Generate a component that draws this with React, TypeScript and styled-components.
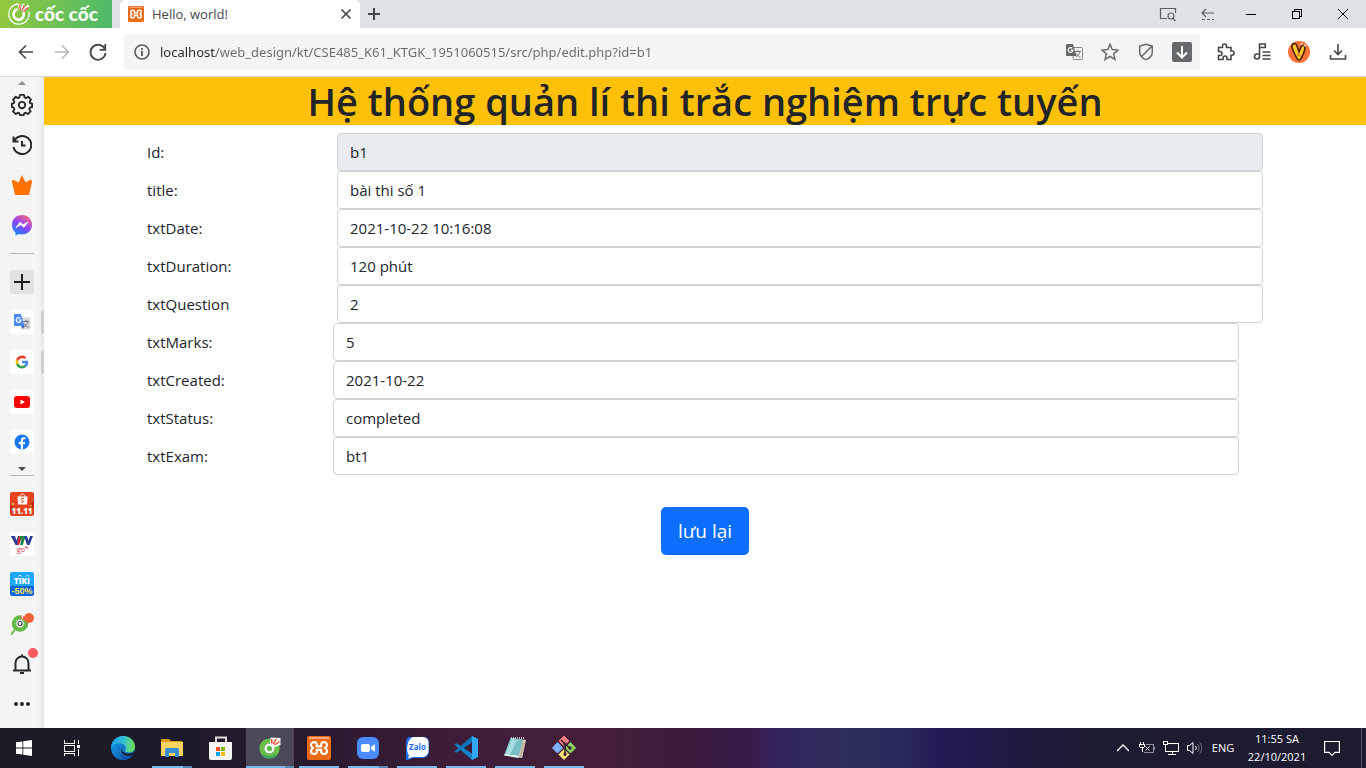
import React from 'react';
import styled, { createGlobalStyle } from 'styled-components';

const Global = createGlobalStyle`
  *, *::before, *::after { box-sizing: border-box; }
  body { margin: 0; background: #fff; font-family: "Open Sans", "Noto Sans", sans-serif; color: #212529; }
  button { font: inherit; color: inherit; border: 0; padding: 0; background: none; cursor: pointer; }
  a { color: inherit; text-decoration: none; }
  svg { display: block; flex: none; }
`;

/* ---------- shell ---------- */
const Screen = styled.div`
  display: flex;
  flex-direction: column;
  min-height: 100vh;
`;
const Body = styled.div`
  display: flex;
  flex: 1;
`;

/* ---------- tab strip ---------- */
const TabStrip = styled.header`
  display: flex;
  height: 28px;
  background: #dee1e6;
`;
const Brand = styled.button`
  display: flex;
  align-items: center;
  gap: 5px;
  width: 112px;
  padding-left: 8px;
  background: linear-gradient(100deg, #93c83d, #4cb96b);
`;
const BrandName = styled.span`
  color: #fff;
  font: 900 19px/28px Lato, sans-serif;
  white-space: nowrap;
`;
const Tab = styled.div`
  display: flex;
  align-items: center;
  gap: 8px;
  width: 240px;
  margin-left: 8px;
  padding: 0 6px 0 8px;
  background: #fff;
  border-radius: 6px 6px 0 0;
`;
const TabTitle = styled.span`
  flex: 1;
  font-size: 13px;
  line-height: 20px;
  color: #45484c;
`;
const StripButton = styled.button<{ $w: number }>`
  display: grid;
  place-items: center;
  width: ${p => p.$w}px;
  height: 28px;
`;
const Spacer = styled.div`
  flex: 1;
`;

/* ---------- toolbar ---------- */
const Toolbar = styled.nav`
  display: flex;
  align-items: center;
  height: 49px;
  padding: 0 8px;
  background: #fff;
  border-bottom: 1px solid #d5d8dc;
`;
const ToolButton = styled.button<{ $w?: number }>`
  display: grid;
  place-items: center;
  flex: none;
  width: ${p => p.$w ?? 36}px;
  height: 36px;
`;
const AddressBar = styled.div`
  display: flex;
  align-items: center;
  flex: 1;
  height: 36px;
  margin: 0 8px;
  background: #f4f4f4;
  border-radius: 4px;
`;
const AddressInput = styled.input`
  flex: 1;
  min-width: 0;
  height: 24px;
  padding: 0;
  border: 0;
  outline: 0;
  font: 13px/24px "Noto Sans", "Open Sans", sans-serif;
  color: transparent;
  caret-color: #222;
  background: linear-gradient(90deg, #26282b 56px, #66696d 56px);
  -webkit-background-clip: text;
  background-clip: text;
`;

/* ---------- sidebar ---------- */
const Sidebar = styled.aside`
  display: flex;
  flex-direction: column;
  align-items: center;
  flex: none;
  width: 44px;
  background: linear-gradient(90deg, #f4f4f4 38px, #e9e9e9);
`;
const ScrollArrow = styled.button<{ $h: number }>`
  display: grid;
  place-items: end center;
  width: 24px;
  height: ${p => p.$h}px;
  padding-bottom: ${p => (p.$h > 8 ? 4 : 0)}px;
`;
const SideRule = styled.hr<{ $top: number }>`
  width: 24px;
  height: 1px;
  margin: ${p => p.$top}px 0 8px;
  border: 0;
  background: #b5b5b5;
`;
const SideButton = styled.button<{ $tile?: string; $open?: boolean }>`
  position: relative;
  display: grid;
  place-items: center;
  width: 44px;
  height: 40px;
  > span {
    display: grid;
    place-items: center;
    width: 24px;
    height: 24px;
    overflow: hidden;
    border-radius: 3px;
    background: ${p => p.$tile ?? 'transparent'};
  }
  &::after {
    content: "";
    display: ${p => (p.$open ? 'block' : 'none')};
    position: absolute;
    right: 0;
    top: 8px;
    width: 3px;
    height: 24px;
    background: #d0d0d0;
    border-radius: 3px 0 0 3px;
  }
`;
const Badge = styled.i<{ $x: number; $y: number; $color: string }>`
  position: absolute;
  left: ${p => p.$x}px;
  top: ${p => p.$y}px;
  width: 10px;
  height: 10px;
  border-radius: 50%;
  background: ${p => p.$color};
`;

/* ---------- page ---------- */
const Page = styled.main`
  flex: 1;
  min-width: 0;
  background: #fff;
`;
const Title = styled.h1`
  margin: 0 0 8px;
  background: #ffc107;
  font-size: 38px;
  line-height: 48px;
  height: 48px;
  font-weight: 600;
  text-align: center;
  white-space: nowrap;
`;
const Form = styled.form`
  padding: 0 103px;
`;
const Field = styled.div<{ $narrow: boolean }>`
  display: grid;
  grid-template-columns: ${p => (p.$narrow ? 186 : 190)}px 1fr;
  align-items: center;
  padding-right: ${p => (p.$narrow ? 24 : 0)}px;
`;
const FieldLabel = styled.label`
  font-size: 15px;
  line-height: 24px;
`;
const FieldInput = styled.input`
  width: 100%;
  height: 38px;
  padding: 6px 12px;
  border: 1px solid #ced4da;
  border-radius: 4px;
  background: #fff;
  color: #212529;
  font: 15px/24px "Open Sans", "Noto Sans", sans-serif;
  &:read-only { background: #e9ecef; }
`;
const SaveButton = styled.button`
  display: block;
  width: 88px;
  height: 48px;
  margin: 32px auto 0;
  border-radius: 5px;
  background: #0d6efd;
  color: #fff;
  font-size: 19px;
  line-height: 30px;
`;
const Actions = styled.div`
  display: flex;
`;

/* ---------- taskbar ---------- */
const Taskbar = styled.footer`
  display: flex;
  height: 40px;
  color: #fff;
  background: linear-gradient(90deg, #1c1a26 0%, #1f1a2a 14%, #2b1a31 24%, #3f1d38 34%, #451e39 44%,
    #3b1c3a 50%, #371c4b 55%, #33245e 57%, #2d2f59 62%, #27295b 66%, #241a53 69%, #201a42 74%, #1c1c30 80%, #1d1b30 100%);
`;
const TaskButton = styled.button<{ $active?: boolean }>`
  display: grid;
  place-items: center;
  width: 48px;
  height: 40px;
  background: ${p => (p.$active ? '#4d4859' : 'transparent')};
`;
const Apps = styled.div`
  display: flex;
  gap: 1px;
  margin-left: 3px;
`;
const AppButton = styled(TaskButton)<{ $bar?: 'one' | 'many' }>`
  position: relative;
  &::after {
    content: "";
    display: ${p => (p.$bar ? 'block' : 'none')};
    position: absolute;
    left: ${p => (p.$active ? 0 : 4)}px;
    right: ${p => (p.$active ? 0 : 4)}px;
    bottom: 0;
    height: 2px;
    background: ${p => (p.$bar === 'many' ? 'linear-gradient(90deg, #76b9ed calc(100% - 9px), #5688b0 calc(100% - 9px))' : '#76b9ed')};
  }
`;
const TrayButton = styled(TaskButton)<{ $w: number }>`
  width: ${p => p.$w}px;
  font-size: 11px;
  line-height: 18px;
`;
const Peek = styled.button`
  width: 5px;
  margin-left: 12px;
  border-left: 1px solid #5c5a68;
`;

/* ---------- icons ---------- */
type LineProps = { d: string; s?: number; w?: number; c?: string; box?: number; crisp?: boolean };
const Line = ({ d, s = 20, w = 1.6, c = '#44474b', box = 20, crisp }: LineProps) => (
  <svg width={s} height={s} viewBox={`0 0 ${box} ${box}`} fill="none" stroke={c} strokeWidth={w} shapeRendering={crisp ? 'crispEdges' : 'auto'}>
    <path d={d} />
  </svg>
);

const BrandMark = () => (
  <svg width="22" height="22" viewBox="0 0 22 22" fill="none" stroke="#fff">
    <path d="M20.800 8.500A10.200 10.200 0 1 1 10.500.8" strokeWidth="1.200" />
    <path d="M15.300 9A5.200 5.200 0 1 1 9.500 6.300" strokeWidth="2.600" />
    <path d="M11 1.500l1.500 5M15.500 1l-1.500 6M20.500 2.500l-5.500 6" strokeWidth="2.600" />
    <path d="M11.500 2l1.300 5M16.300 2l-2 5M20 4.500l-4.500 4" stroke="#ef4b3c" strokeWidth="1.200" />
  </svg>
);

const CocMark = () => (
  <svg width="22" height="22" viewBox="0 0 22 22" fill="none">
    <circle cx="10.500" cy="11.500" r="7.600" stroke="#6cc04a" strokeWidth="5" />
    <path d="M4 18a9.500 9.500 0 0 0 13 0" stroke="#3ba55a" strokeWidth="2.500" />
    <circle cx="10.500" cy="11.500" r="5" fill="#fff" />
    <circle cx="10.500" cy="11.500" r="2.800" fill="#5bb947" />
    <path d="M11 9l.5-8.500L21.500 1v7L14 11z" fill="#f4fbef" />
    <path d="M12.500 2l.5 4.500M17 2l-2.500 5M20.500 4.500L15.500 8" stroke="#ef4b3c" strokeWidth="1.500" />
  </svg>
);

const Xampp = ({ size }: { size: number }) => (
  <svg width={size} height={size} viewBox="0 0 24 24">
    <rect width="24" height="24" rx="2" fill="#ea6a16" />
    <path d="M2 1h20v2H2z" fill="#f6a877" />
    <path d="M9.600 10.400c.6-1.200.6-4.200-2.300-4.200C5.400 6.200 4 7.300 4 9.100c0 1.600 1 2.400 2.200 2.900C5 12.500 4 13.400 4 15.100c0 1.900 1.400 2.900 3.300 2.900 2.900 0 2.900-3 2.300-4.200h4.800c-.6 1.200-.6 4.200 2.300 4.200 1.900 0 3.300-1 3.300-2.900 0-1.700-1-2.600-2.200-3.100 1.200-.5 2.200-1.300 2.200-2.900 0-1.800-1.400-2.900-3.300-2.900-2.900 0-2.900 3-2.300 4.200z" fill="none" stroke="#fff" strokeWidth="2.200" strokeLinejoin="round" />
  </svg>
);

const Google = ({ size }: { size: number }) => (
  <svg width={size} height={size} viewBox="0 0 24 24">
    <path fill="#4285f4" d="M22.560 12.250c0-.780-.070-1.530-.200-2.250H12v4.260h5.920c-.260 1.370-1.040 2.530-2.210 3.310v2.770h3.570c2.080-1.920 3.280-4.740 3.280-8.090z" />
    <path fill="#34a853" d="M12 23c2.970 0 5.460-.980 7.280-2.660l-3.570-2.770c-.980.660-2.230 1.060-3.710 1.060-2.860 0-5.290-1.930-6.160-4.530H2.180v2.840C3.990 20.530 7.700 23 12 23z" />
    <path fill="#fbbc05" d="M5.840 14.090c-.220-.660-.350-1.360-.350-2.090s.130-1.430.350-2.090V7.070H2.180C1.430 8.550 1 10.220 1 12s.430 3.450 1.180 4.930z" />
    <path fill="#ea4335" d="M12 5.380c1.620 0 3.060.560 4.210 1.640l3.150-3.150C17.450 2.090 14.970 1 12 1 7.700 1 3.990 3.470 2.180 7.070l3.660 2.840C6.710 7.310 9.140 5.380 12 5.380z" />
  </svg>
);

const Translate = ({ gray }: { gray?: boolean }) => (
  <svg width="18" height="18" viewBox="0 0 18 18" fill="none">
    <rect x="8" y="4.500" width="9.500" height="12" rx="1" fill={gray ? '#f4f4f4' : '#d8dadd'} stroke={gray ? '#85888b' : 'none'} />
    <path d="M10 8.500h6M13 7v1.500M15 8.500c-.5 2.500-2 4.500-4 5.500M11.500 10.500c1 2 2 3 4 3.700" stroke="#71767b" />
    <path d="M2 1h6l3.500 12H2a1 1 0 0 1-1-1V2a1 1 0 0 1 1-1z" fill={gray ? '#65686b' : '#4c8bf5'} />
    {!gray && <path d="M8.500 13h3L9.700 16z" fill="#2451b8" />}
    <path d="M7.300 5.300A2.400 2.400 0 1 0 8 7.200H5.800" stroke="#fff" strokeWidth="1.200" />
  </svg>
);

const Gear = () => (
  <svg width="22" height="22" viewBox="0 0 24 24" fill="none" stroke="#26282a" strokeWidth="2" strokeLinejoin="round">
    <path d="M9.800 2h4.400l.6 2.800 1.600.7 2.400-1.500 3 3.100-1.500 2.300.6 1.600 2.100.6v3.800l-2.400.5-.7 1.600 1.500 2.400-3 3-2.400-1.500-1.600.7-.6 2H9.800l-.6-2-1.600-.7-2.400 1.500-3-3 1.500-2.400-.7-1.600L1 15.400v-3.800l2.100-.6.6-1.600-1.500-2.300 3-3.100 2.400 1.500 1.600-.7z" transform="translate(0 -1)" />
    <circle cx="12" cy="12" r="3.500" />
  </svg>
);

const Messenger = () => (
  <svg width="20" height="21" viewBox="0 0 20 21">
    <defs>
      <linearGradient id="msg" x1=".2" y1="1" x2=".8" y2="0">
        <stop offset="0" stopColor="#0a8cff" />
        <stop offset=".5" stopColor="#8a46ff" />
        <stop offset="1" stopColor="#ff6377" />
      </linearGradient>
    </defs>
    <path d="M10 0c5.700 0 10 4.200 10 9.700s-4.300 9.700-10 9.700c-1 0-2-.1-2.900-.4L3.500 20.600v-3C1.300 15.800 0 13 0 9.700 0 4.200 4.300 0 10 0z" fill="url(#msg)" />
    <path d="M4 12.500l4-5.200 3.200 2.500L16 7l-4 5.200-3.200-2.400z" fill="#fff" stroke="#fff" strokeWidth=".8" />
  </svg>
);

const Shopee = () => (
  <svg width="24" height="24" viewBox="0 0 24 24">
    <rect width="24" height="24" fill="#e5421f" />
    <path d="M0 12l4 5-4 3zM24 8l-4 5 4 4z" fill="#b92a18" />
    <path d="M2 11h2v2H2zM20 13h2v1h-2z" fill="#f9c23c" />
    <path d="M2 16h1v1H2zM22 8h1v1h-1z" fill="#3ebea8" />
    <path d="M7.500 4.500h10L17 12.500H8z" fill="#fff" />
    <path d="M10 5c0-4 5-4 5 0" fill="none" stroke="#fff" />
    <path d="M14 6.500c-3-1-3.500 1.500-1.500 2s1.500 2.500-1.500 1.500" fill="none" stroke="#e5421f" />
    <text x="12" y="21.500" textAnchor="middle" fill="#fff" fontFamily="Open Sans" fontWeight="800" fontSize="8">11.11</text>
  </svg>
);
const Vtv = () => (
  <svg width="24" height="24" viewBox="0 0 24 24">
    <path d="M1 4h4l1.500 4.500L8 4h3l-3.500 9h-2z" fill="#2c3f95" />
    <path d="M8.500 4h4l-3.500 9H7z" fill="#d6283a" />
    <path d="M10 4h7l-1 3h-1.500l-1.500 6h-3l1.500-6H9.500z" fill="#1a8a4a" />
    <path d="M14 4h3l1.500 4.500L20 4h3l-3.500 9h-2.500z" fill="#2c3f95" />
    <text x="11" y="20" textAnchor="middle" fill="#d6283a" fontFamily="Open Sans" fontSize="7">go</text>
    <path d="M15 15h2v2" fill="none" stroke="#d6283a" />
  </svg>
);
const Tiki = () => (
  <svg width="24" height="24" viewBox="0 0 24 24">
    <rect width="24" height="24" fill="#1ba8ff" />
    <path d="M0 14h24v10H0z" fill="#0c63e0" />
    <text x="12" y="12" textAnchor="middle" fill="#fff" fontFamily="Open Sans" fontWeight="800" fontSize="8">TIKI</text>
    <path d="M8.500 4.500L10 3l1.500 1.500M16 4.500L17.500 3 19 4.500" fill="none" stroke="#fff" />
    <text x="12" y="22" textAnchor="middle" fill="#ffe94f" fontFamily="Liberation Sans" fontWeight="700" fontSize="9">-50%</text>
  </svg>
);

const Edge = () => (
  <svg width="24" height="24" viewBox="0 0 24 24">
    <defs>
      <linearGradient id="edgeTop" x1="0" y1=".4" x2="1" y2=".5">
        <stop offset="0" stopColor="#1b9de2" />
        <stop offset=".5" stopColor="#35c1d8" />
        <stop offset="1" stopColor="#6be04e" />
      </linearGradient>
      <linearGradient id="edgeLow" x1="0" y1="0" x2="1" y2="1">
        <stop offset="0" stopColor="#1a9be6" />
        <stop offset="1" stopColor="#0b55a8" />
      </linearGradient>
    </defs>
    <circle cx="12" cy="12" r="12" fill="url(#edgeLow)" />
    <path d="M0 11.500C.5 5 5.500 0 12 0c7 0 12 5 12 10.500 0 4-3 6-6.200 6-2.800 0-4.300-1-3.600-2.300 1.600-2.700.2-6.700-4.700-6.700C4.500 7.500.8 9 0 11.500z" fill="url(#edgeTop)" />
    <path d="M10 9.500c-3 2-2.700 7 .5 9.500 3.500 2.800 8.500 2.300 11.500-.2-1 2-3.500 4.200-6.500 4.900C9 22 5.500 14 10 9.500z" fill="#0d4f9f" />
    <path d="M12.500 10.200c-2.600 1.300-2.600 4 0 6 3 2.200 6.500 1.800 9.500.3L24 18l-2.200 1.200c-4.500 1.600-11.600.3-11.600-5 0-2 .8-3.300 2.300-4z" fill="#1d1b2a" />
  </svg>
);
const Explorer = () => (
  <svg width="22" height="20" viewBox="0 0 22 20">
    <path d="M0 1h8l2 2h11v5H0z" fill="#d99a1b" />
    <path d="M0 4h22v14H0z" fill="#fcd462" />
    <path d="M4 19v-7a2 2 0 0 1 2-2h10a2 2 0 0 1 2 2v7h-4v-4H8v4z" fill="#3f8fd8" />
  </svg>
);
const Store = () => (
  <svg width="24" height="24" viewBox="0 0 24 24">
    <path d="M7 7V1.500h10V7" fill="none" stroke="#dcdcdc" strokeWidth="2" />
    <path d="M0 6h23v16a2 2 0 0 1-2 2H2a2 2 0 0 1-2-2z" fill="#f5f5f5" />
    <path d="M7 11h4v4H7z" fill="#f25022" />
    <path d="M12 11h4v4h-4z" fill="#7fba00" />
    <path d="M7 16h4v4H7z" fill="#00a4ef" />
    <path d="M12 16h4v4h-4z" fill="#ffb900" />
  </svg>
);
const Zoom = () => (
  <svg width="24" height="24" viewBox="0 0 24 24">
    <rect x="1" y="1" width="22" height="22" rx="6" fill="#4a8cff" />
    <rect x="5" y="8" width="9" height="8" rx="2" fill="#fff" />
    <path d="M15 11l4-3v8l-4-3z" fill="#fff" />
  </svg>
);
const Zalo = () => (
  <svg width="24" height="24" viewBox="0 0 24 24">
    <path d="M3 1h16a5 5 0 0 1 5 5v10a6 6 0 0 1-6 6H8l-5 2H1V5z" fill="#1a6dff" />
    <path d="M8 1h10a5.500 5.500 0 0 1 5.500 5.500V15a6 6 0 0 1-6 6H8l-5 1.500 1-3C1 16 1.500 3 8 1z" fill="#fff" />
    <text x="12.500" y="14" textAnchor="middle" fill="#1a6dff" fontFamily="Open Sans" fontWeight="700" fontSize="8">Zalo</text>
  </svg>
);
const VsCode = () => (
  <svg width="24" height="24" viewBox="0 0 24 24">
    <path d="M2 7L.5 8.500 18 24l1-6z" fill="#1583c9" />
    <path d="M2 17L.5 15.500 18 0l1 6z" fill="#0f75bb" />
    <path d="M18 6.500L10.500 12l7.500 5.500z" fill="#3b1c36" />
    <path d="M18 0l6 3v18l-6 3z" fill="#2fa8ef" />
  </svg>
);
const Notepad = () => (
  <svg width="24" height="24" viewBox="0 0 24 24">
    <path d="M8 2l15 2-4 18-17-3z" fill="#dfe7e6" />
    <path d="M7.500 2L20 4l-4 16L1.500 18z" fill="#78bfc6" />
    <path d="M8.500 3L14 4 7 18.500 3 17.500z" fill="#a9dce0" />
    <path d="M1.500 18L16 20l-.5 2L1 19.500z" fill="#dff4f2" />
    <path d="M16 20l4-16 2.500 1.500L19 22z" fill="#c7b79d" />
    <path d="M8 2h13" stroke="#e9eef0" strokeWidth="1.500" strokeDasharray="1 1" />
  </svg>
);
const Git = () => (
  <svg width="24" height="24" viewBox="0 0 24 24">
    <path d="M12 0l5 5-5 5-5-5z" fill="#f47e7e" stroke="#f47e7e" />
    <path d="M5.500 6.500l5 5.500-5 5L.5 12z" fill="#80b3ff" stroke="#80b3ff" />
    <path d="M18.500 6.500l5 5.500-5 5-5-5z" fill="#8dd35f" stroke="#8dd35f" />
    <path d="M12 13.500l5 5-5 5-5-5z" fill="#ffe680" stroke="#ffe680" />
    <path d="M9 4l4 4v12M13 8l5 4" fill="none" stroke="#3e2230" strokeWidth="1.500" />
    <circle cx="13" cy="8" r="1.700" fill="#3e2230" />
    <circle cx="18" cy="12" r="1.700" fill="#3e2230" />
    <circle cx="13" cy="18" r="1.700" fill="#3e2230" />
  </svg>
);

/* ---------- data ---------- */
const fields = [
  { name: 'id', label: 'Id:', value: 'b1', locked: true },
  { name: 'title', label: 'title:', value: 'bài thi số 1' },
  { name: 'txtDate', label: 'txtDate:', value: '2021-10-22 10:16:08' },
  { name: 'txtDuration', label: 'txtDuration:', value: '120 phút' },
  { name: 'txtQuestion', label: 'txtQuestion', value: '2' },
  { name: 'txtMarks', label: 'txtMarks:', value: '5', narrow: true },
  { name: 'txtCreated', label: 'txtCreated:', value: '2021-10-22', narrow: true },
  { name: 'txtStatus', label: 'txtStatus:', value: 'completed', narrow: true },
  { name: 'txtExam', label: 'txtExam:', value: 'bt1', narrow: true },
];

const apps: { name: string; icon: React.ReactNode; bar?: 'one' | 'many'; active?: boolean }[] = [
  { name: 'Edge', icon: <Edge /> },
  { name: 'File Explorer', icon: <Explorer />, bar: 'many' },
  { name: 'Store', icon: <Store /> },
  { name: 'Browser', icon: <CocMark />, bar: 'many', active: true },
  { name: 'XAMPP', icon: <Xampp size={24} />, bar: 'one' },
  { name: 'Zoom', icon: <Zoom />, bar: 'many' },
  { name: 'Zalo app', icon: <Zalo />, bar: 'one' },
  { name: 'VS Code', icon: <VsCode />, bar: 'one' },
  { name: 'Notepad', icon: <Notepad />, bar: 'one' },
  { name: 'Git', icon: <Git />, bar: 'one' },
];

const BrowserTop = () => (
  <>
    <TabStrip>
      <Brand aria-label="Menu">
        <BrandMark />
        <BrandName>cốc cốc</BrandName>
      </Brand>
      <Tab>
        <Xampp size={16} />
        <TabTitle>Hello, world!</TabTitle>
        <StripButton $w={16} aria-label="Close tab"><Line s={12} box={12} w={1.700} d="M1.500 1.500l9 9M10.500 1.500l-9 9" /></StripButton>
      </Tab>
      <StripButton $w={28} aria-label="New tab"><Line s={12} box={12} w={2} d="M6 0v12M0 6h12" /></StripButton>
      <Spacer />
      <StripButton $w={40} aria-label="Search tabs"><Line s={18} box={18} w={1.200} c="#5a5d61" d="M8 13.500H1.500v-10h15V8M12 8a3 3 0 1 0 0 6a3 3 0 1 0 0-6M14 13.500l2.500 2.500" /></StripButton>
      <StripButton $w={40} aria-label="Side panel"><Line s={16} box={16} w={1.200} c="#5a5d61" d="M14 7H2M6 3L2 7l4 4M2 13.500h3M7 13.500h3M12 13.500h2" /></StripButton>
      <StripButton $w={46} aria-label="Minimize"><Line s={10} box={10} w={1} c="#000" crisp d="M0 5.500h10" /></StripButton>
      <StripButton $w={46} aria-label="Restore"><Line s={10} box={10} w={1} c="#000" crisp d="M.5 2.500h7v7h-7zM2.500 2.500v-2h7v7h-2" /></StripButton>
      <StripButton $w={46} aria-label="Close"><Line s={10} box={10} w={1} c="#000" d="M0 0l10 10M10 0L0 10" /></StripButton>
    </TabStrip>
    <Toolbar>
      <ToolButton aria-label="Back"><Line d="M17 10H4M10 3.500L3.500 10l6.500 6.500" /></ToolButton>
      <ToolButton aria-label="Forward"><Line c="#b4b6b8" d="M3 10h13M10 3.500l6.500 6.500-6.500 6.500" /></ToolButton>
      <ToolButton aria-label="Reload"><Line w={1.800} d="M17 7.500A7.500 7.500 0 1 0 17.500 11M17.300 2v5.800h-5.600" /></ToolButton>
      <AddressBar>
        <ToolButton aria-label="Site information">
          <svg width="16" height="16" viewBox="0 0 16 16" fill="none" stroke="#55585c" strokeWidth="1.600">
            <circle cx="8" cy="8" r="7" />
            <path d="M8 7v5M8 4v1.800" strokeWidth="1.800" />
          </svg>
        </ToolButton>
        <AddressInput aria-label="Address" defaultValue="localhost/web_design/kt/CSE485_K61_KTGK_1951060515/src/php/edit.php?id=b1" />
        <ToolButton aria-label="Translate"><Translate gray /></ToolButton>
        <ToolButton aria-label="Bookmark"><Line s={18} w={1.700} c="#6a6d71" d="M10 1.500l2.500 5.800 6.300.6-4.800 4.100 1.500 6.200L10 15l-5.500 3.200L6 12 1.200 7.900l6.300-.6z" /></ToolButton>
        <ToolButton aria-label="Protection"><Line s={18} w={1.700} c="#6a6d71" d="M10 1.500l7 2V10c0 4-3 7-7 8.500C6 17 3 14 3 10V3.500zM4.500 15.500L16 4" /></ToolButton>
        <ToolButton aria-label="Save video">
          <svg width="20" height="20" viewBox="0 0 20 20" fill="none" stroke="#fff" strokeWidth="2">
            <rect width="20" height="20" rx="2" fill="#66696c" stroke="none" />
            <path d="M10 4v11M5 10.500l5 5 5-5" />
          </svg>
        </ToolButton>
      </AddressBar>
      <ToolButton aria-label="Extensions"><Line w={1.600} d="M2.500 5.500h4V4a2 2 0 0 1 4 0v1.500H15V9h1a2 2 0 0 1 0 4.200h-1V17.500h-4V16a2 2 0 0 0-4 0v1.500H2.500v-4H4a2 2 0 0 0 0-4H2.500z" /></ToolButton>
      <ToolButton aria-label="Media"><Line w={1.600} d="M7.500 14.500V2h5.800v3.500H7.500M7.500 14.500a2.500 2.500 0 1 1-2.500-2.500h2.500M10.500 10h8M10.500 13.500h8M10.500 17h8" /></ToolButton>
      <ToolButton $w={38} aria-label="Profile">
        <svg width="22" height="22" viewBox="0 0 22 22">
          <circle cx="11" cy="11" r="11" fill="#ff7338" />
          <path d="M5 3c2-1 3.500 0 4 2l2 6 2-5c1-2.500 4-2 4 .5 0 4-2.500 8-4 11-1 2-3 2-4 0C7 14 4 9 4 5c0-1 .3-1.600 1-2z" fill="#ffc928" stroke="#4b210c" strokeWidth="1.600" />
          <path d="M12 3l2-1 1 2zM15 4h3v2z" fill="#fff" />
          <path d="M9.500 13l2 2" stroke="#c3261b" />
        </svg>
      </ToolButton>
      <ToolButton $w={40} aria-label="Downloads"><Line w={1.600} d="M10 2v10M6 8.500l4 4 4-4M2.500 13v4h15v-4" /></ToolButton>
    </Toolbar>
  </>
);

const BrowserSide = () => (
  <Sidebar>
    <ScrollArrow $h={8} aria-label="Scroll up"><svg width="8" height="4"><path d="M0 4l4-4 4 4z" fill="#909090" /></svg></ScrollArrow>
    <SideButton aria-label="Settings"><Gear /></SideButton>
    <SideButton aria-label="History"><Line w={2} c="#26282a" d="M1.500 1.500v5h5M2 6.500A9 9 0 1 1 1.500 12M10 6v4.500h3.500" /></SideButton>
    <SideButton aria-label="Rewards">
      <svg width="20" height="20" viewBox="0 0 20 20"><path d="M10 0l3.500 7.500L18 5c1.500-.5 2.500 1 2 2l-3 13H3L0 7c-.5-1 .5-2.500 2-2l4.500 2.500z" fill="#ff7200" /></svg>
    </SideButton>
    <SideButton aria-label="Messenger"><Messenger /></SideButton>
    <SideRule $top={8} />
    <SideButton $tile="#e2e2e2" aria-label="Add"><span><Line s={16} box={16} w={2} c="#1d1f21" d="M8 0v16M0 8h16" /></span></SideButton>
    <SideButton $tile="#fff" $open aria-label="Translate"><span><Translate /></span></SideButton>
    <SideButton $tile="#fff" $open aria-label="Google"><span><Google size={14} /></span></SideButton>
    <SideButton $tile="#fff" aria-label="YouTube">
      <span><svg width="16" height="12"><rect width="16" height="12" rx="3" fill="#f00" /><path d="M6.500 3.500v5L11 6z" fill="#fff" /></svg></span>
    </SideButton>
    <SideButton $tile="#fff" aria-label="Facebook">
      <span>
        <svg width="16" height="16" viewBox="0 0 16 16">
          <circle cx="8" cy="8" r="7.500" fill="#1877f2" />
          <path d="M6.800 15.500v-5.300h-2V8h2V6.300c0-2 1.200-3.100 3-3.100.8 0 1.500.1 1.500.1v1.900h-1c-1 0-1.300.6-1.300 1.200V8h2.200l-.4 2.200H9v5.300z" fill="#fff" />
        </svg>
      </span>
    </SideButton>
    <ScrollArrow $h={13} aria-label="Scroll down"><svg width="8" height="4"><path d="M0 0l4 4 4-4z" fill="#4a4a4a" /></svg></ScrollArrow>
    <SideRule $top={0} />
    <SideButton $tile="#e5421f" aria-label="Shopee"><span><Shopee /></span></SideButton>
    <SideButton $tile="#fff" aria-label="Television"><span><Vtv /></span></SideButton>
    <SideButton $tile="#1ba8ff" aria-label="Shopping"><span><Tiki /></span></SideButton>
    <SideButton aria-label="Points">
      <svg width="22" height="22" viewBox="0 0 22 22" fill="none">
        <path d="M0 22l5-7" stroke="#6fbe44" strokeWidth="2" />
        <circle cx="9" cy="10.500" r="6" stroke="#62b946" strokeWidth="4.500" />
        <circle cx="9" cy="10.500" r="4" fill="#fff" stroke="#9ccf8c" />
        <circle cx="9" cy="10.500" r="2" fill="#fff" stroke="#444" strokeWidth="1.200" />
        <path d="M9 1l2 6 4-5z" fill="#fff" />
        <path d="M10 2l.5 4M13 3l-1.500 4" stroke="#f04f3e" />
      </svg>
      <Badge $x={24} $y={9} $color="#f2633a" />
    </SideButton>
    <SideButton aria-label="Notifications">
      <Line w={2} c="#26282a" d="M1 16.500h18M3.500 16.500V9a6.500 6.500 0 0 1 13 0v7.500M10 .5V2M8 19h4" />
      <Badge $x={28} $y={4} $color="#ff5a60" />
    </SideButton>
    <SideButton aria-label="More">
      <svg width="16" height="4" fill="#26282a"><circle cx="2" cy="2" r="2" /><circle cx="8" cy="2" r="2" /><circle cx="14" cy="2" r="2" /></svg>
    </SideButton>
  </Sidebar>
);

const DesktopBar = () => (
  <Taskbar>
    <TaskButton aria-label="Start">
      <svg width="16" height="16" viewBox="0 0 16 16" fill="#fff"><path d="M0 2.300l6.500-.9v6.200H0zM7.300 1.300L16 0v7.600H7.300zM0 8.400h6.500v6.200L0 13.700zM7.300 8.400H16V16l-8.700-1.300z" /></svg>
    </TaskButton>
    <TaskButton aria-label="Task view"><Line s={16} box={16} w={1} c="#fff" crisp d="M.5 0v3.500h10V0M.5 5.500h10v6H.5zM.5 16v-2.500h10V16M14.500 0v4M14.500 9v7M13 5.500h3M13 6.500h3M13 7.500h3" /></TaskButton>
    <Apps>
      {apps.map(a => (
        <AppButton key={a.name} $bar={a.bar} $active={a.active} aria-label={a.name}>{a.icon}</AppButton>
      ))}
    </Apps>
    <Spacer />
    <TrayButton $w={24} aria-label="Hidden icons"><Line s={12} box={12} w={1.300} c="#fff" d="M0 9l6-6 6 6" /></TrayButton>
    <TrayButton $w={24} aria-label="Battery">
      <svg width="16" height="16" viewBox="0 0 16 16" fill="none" stroke="#fff">
        <path d="M1.500 2v2M4.500 2v2M.5 4.500h5v2l-1 1h-3l-1-1zM3.500 8v4" shapeRendering="crispEdges" />
        <path d="M5 12.500h9.500v-8H7M15.500 7v3" stroke="#8f8d99" shapeRendering="crispEdges" />
        <path d="M6.500 6.500l4 4M10.500 6.500l-4 4" />
      </svg>
    </TrayButton>
    <TrayButton $w={24} aria-label="Network"><Line s={16} box={16} w={1} c="#fff" crisp d="M5 3.500h10.500v8H5.500M.5 1.500h4v3h-4zM2.500 4v7.500h3M5 14.500h8M9.500 12v2" /></TrayButton>
    <TrayButton $w={24} aria-label="Volume">
      <svg width="16" height="16" viewBox="0 0 16 16" fill="none" stroke="#fff"><path d="M.5 5.500h2l3.500-3v11l-3.500-3h-2z" /><path d="M8.500 6c1 1 1 3 0 4" /><path d="M10.500 4c2 2 2 6 0 8M12.500 2.500c3 3 3 8 0 11" stroke="#777585" /></svg>
    </TrayButton>
    <TrayButton $w={32}>ENG</TrayButton>
    <TrayButton $w={76}><span>11:55 SA<br />22/10/2021</span></TrayButton>
    <TrayButton $w={34} aria-label="Action center"><Line s={16} box={16} w={1.200} c="#fff" d="M.6 1.500h14.800v10.800h-4.400L8 15.300l-3-3H.6z" /></TrayButton>
    <Peek aria-label="Show desktop" />
  </Taskbar>
);

export default function App() {
  return (
    <Screen>
      <Global />
      <BrowserTop />
      <Body>
        <BrowserSide />
        <Page>
          <Title>Hệ thống quản lí thi trắc nghiệm trực tuyến</Title>
          <Form onSubmit={e => e.preventDefault()}>
            {fields.map(f => (
              <Field key={f.name} $narrow={!!f.narrow}>
                <FieldLabel htmlFor={f.name}>{f.label}</FieldLabel>
                <FieldInput id={f.name} name={f.name} defaultValue={f.value} readOnly={!!f.locked} />
              </Field>
            ))}
            <Actions>
              <SaveButton type="submit">lưu lại</SaveButton>
            </Actions>
          </Form>
        </Page>
      </Body>
      <DesktopBar />
    </Screen>
  );
}
